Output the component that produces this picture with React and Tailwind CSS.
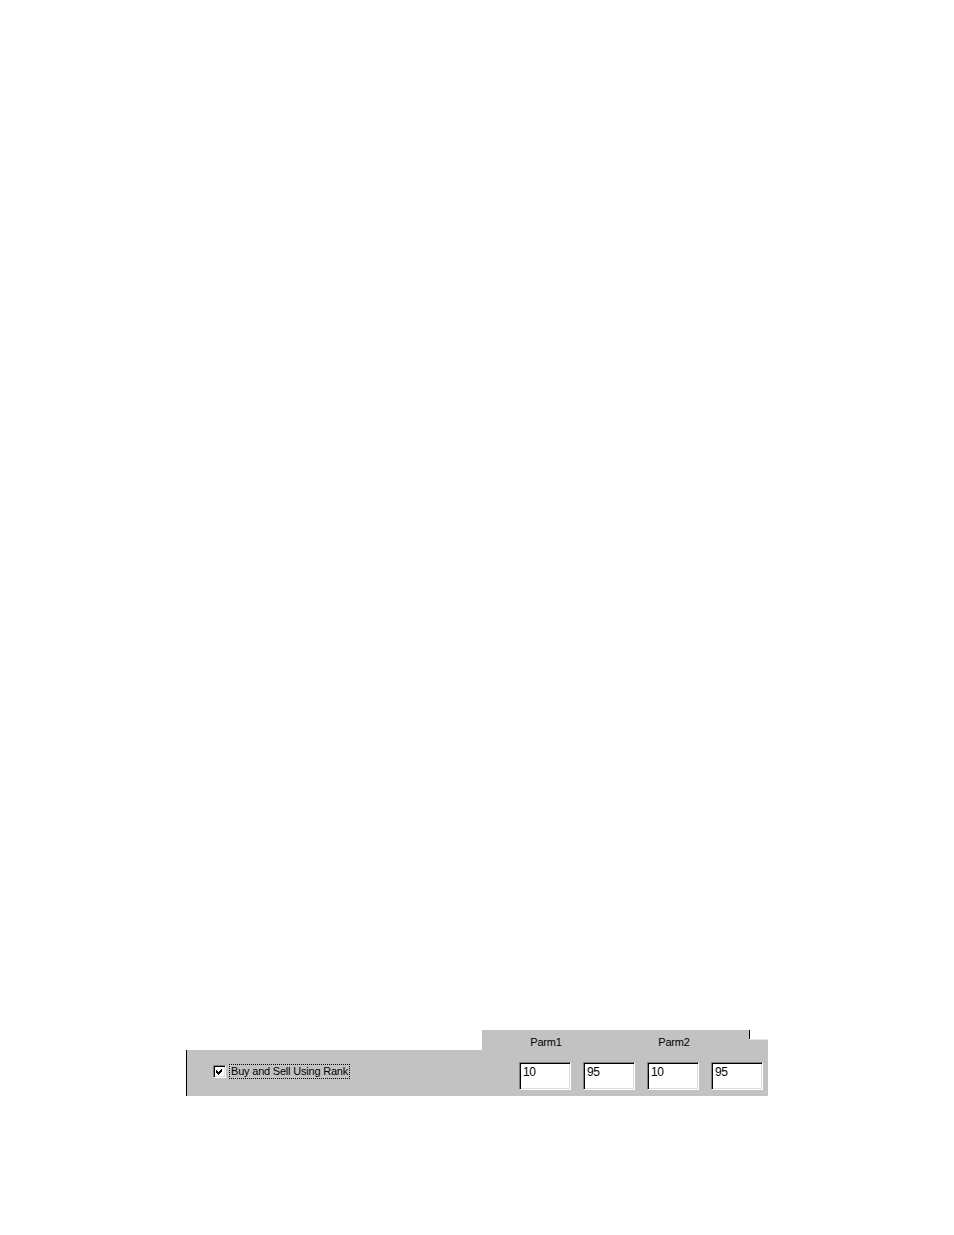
const sunken =
  'border border-t-[#808080] border-l-[#808080] border-r-white border-b-white shadow-[inset_1px_1px_0_#000,inset_-1px_-1px_0_#dfdfdf] bg-white';

function RankField({ value }) {
  return (
    <div className={`w-[52px] h-[28px] ${sunken} pl-[3px] pt-[2px] text-[12px] leading-[14px] tracking-[-0.3px] text-black`}>
      {value}
    </div>
  );
}

export default function App() {
  const parms = ['10', '95', '10', '95'];

  return (
    <div className="min-h-[1235px] bg-white pt-[1030px] pl-[186px] font-['Liberation_Sans',Arial,sans-serif]">
      <div className="w-[582px]">
        {/* column header tab */}
        <div className="flex h-[20px]">
          <div className="w-[296px]" />
          <div className="w-[267px] bg-[#c2c2c2] flex pl-[38px] gap-[76px] pt-[6px] text-[11px] leading-[13px] tracking-[-0.2px] text-black">
            <div className="w-[52px] text-center">Parm1</div>
            <div className="w-[52px] text-center">Parm2</div>
          </div>
          <div className="flex-1 flex flex-col">
            <div className="h-[9px] border-l border-black" />
            <div className="flex-1 bg-[#c2c2c2] border-t border-[#e4e4e4]" />
          </div>
        </div>

        {/* row */}
        <div className="h-[46px] bg-[#c2c2c2] border-l border-black flex items-start pt-[12px] pr-[5px]">
          <div className="flex items-center ml-[26px] mt-[2px] h-[15px]">
            <div className={`w-[13px] h-[13px] ${sunken} flex items-center justify-center`}>
              <svg width="9" height="9" viewBox="0 0 9 9" shapeRendering="crispEdges">
                <path d="M1 3 L3 5 L7 1 L7 4 L3 8 L1 6 Z" fill="#000" />
              </svg>
            </div>
            <div className="ml-[3px] h-[15px] px-[1px] border border-dotted border-black flex items-center text-[11px] leading-[13px] tracking-[-0.2px] text-black whitespace-nowrap">
              Buy and Sell Using Rank
            </div>
          </div>
          <div className="ml-auto flex gap-[12px]">
            {parms.map((p, i) => (
              <RankField key={i} value={p} />
            ))}
          </div>
        </div>
      </div>
    </div>
  );
}
